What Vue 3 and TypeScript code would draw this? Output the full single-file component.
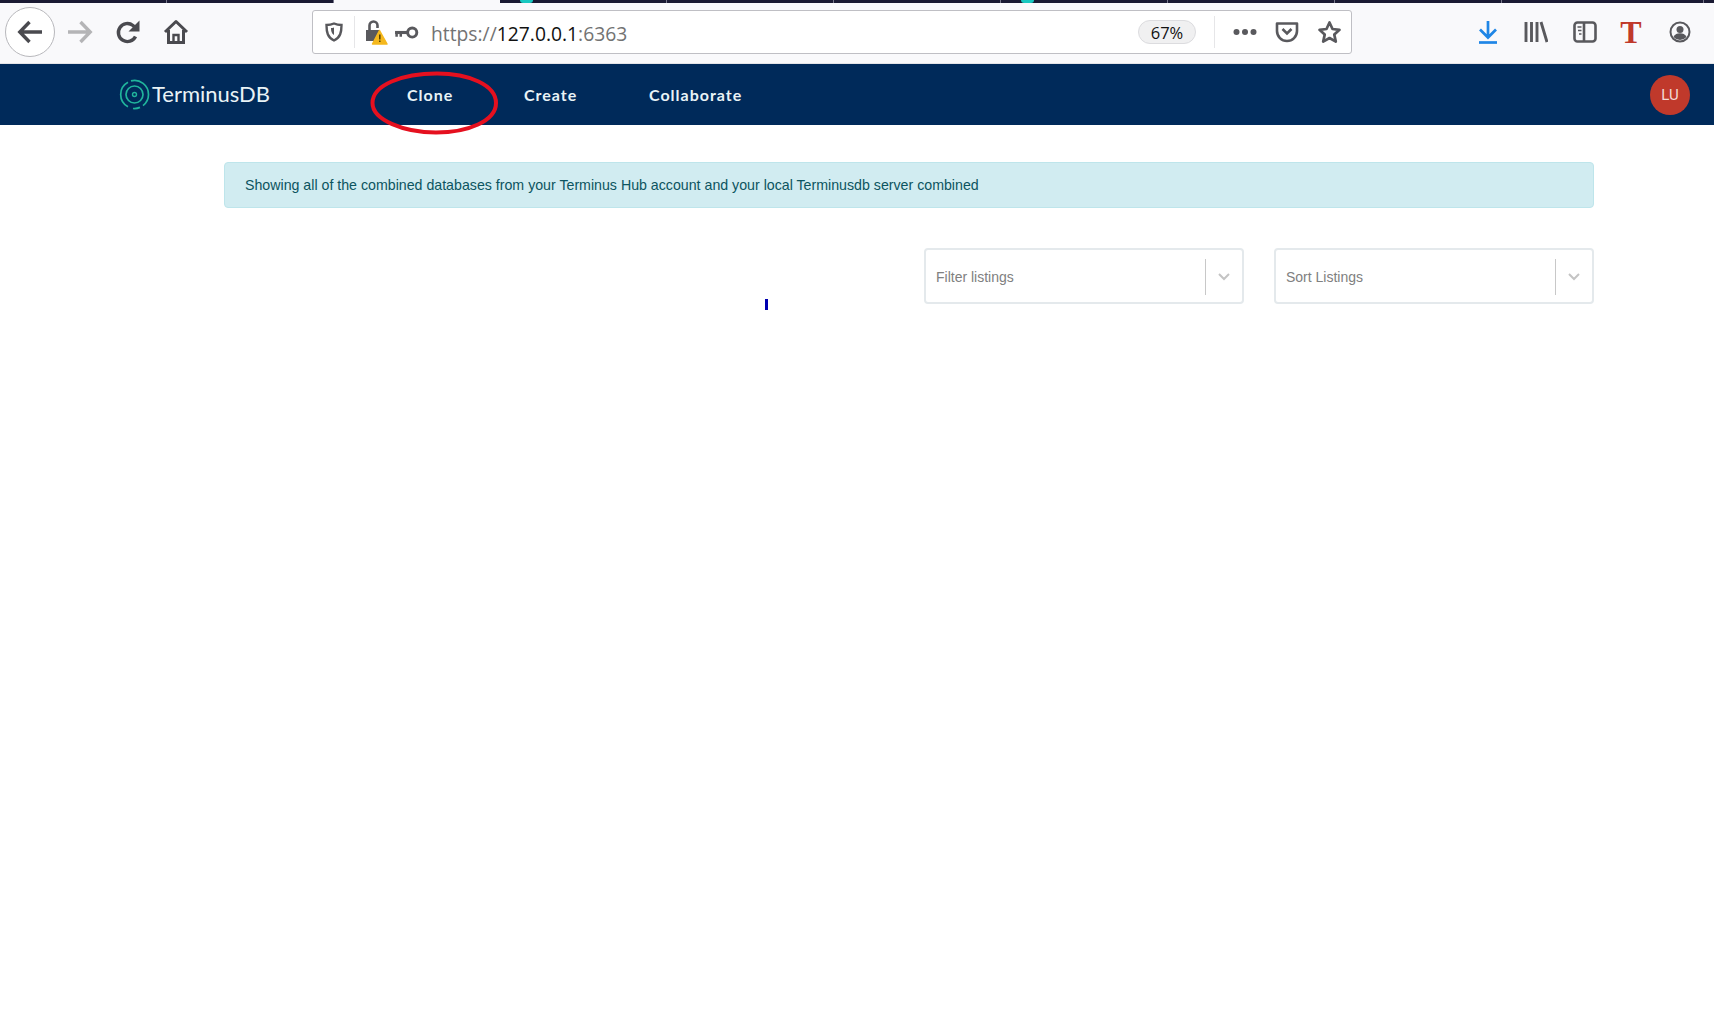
<script setup lang="ts">
const tabs = [
  { width: 167 },
  { width: 167 },
  { width: 166, active: true },
  { width: 167, glow: true },
  { width: 167 },
  { width: 167 },
  { width: 167, glow: true },
  { width: 167 },
  { width: 167 },
  { width: 202 },
];

const navLinks = [
  { label: "Clone", width: 117 },
  { label: "Create", width: 125 },
  { label: "Collaborate", width: 140 },
];

const selects = ["Filter listings", "Sort Listings"];
</script>

<template>
  <div class="page">
    <!-- browser chrome -->
    <div class="tabstrip">
      <div
        v-for="(tab, i) in tabs"
        :key="i"
        class="tab"
        :class="{ active: tab.active }"
        :style="{ width: tab.width + 'px' }"
      >
        <span v-if="tab.glow" class="glow" />
      </div>
    </div>

    <div class="toolbar">
      <div class="nav-buttons">
        <div class="back">
          <svg width="28" height="28" viewBox="0 0 28 28" fill="none" stroke="#4a4a4f" stroke-width="3.4">
            <path d="M26 14H4M13.500 4 3.800 14l9.700 10" />
          </svg>
        </div>
        <svg class="forward" width="28" height="28" viewBox="0 0 28 28" fill="none" stroke="#b4b4b6" stroke-width="3.4">
          <path d="M2 14h22M14.500 4l9.700 10-9.700 10" />
        </svg>
        <svg class="reload" width="26" height="26" viewBox="0 0 26 26" fill="none" stroke="#4a4a4f" stroke-width="3.4">
          <path d="M20.500 17.500A9 9 0 1 1 18 6.500L22 10" />
          <path d="M24.500 1.500v11h-11Z" fill="#4a4a4f" stroke="none" />
        </svg>
        <svg class="home" width="26" height="26" viewBox="0 0 26 26" fill="none" stroke="#4a4a4f" stroke-width="3">
          <path d="M2 13 13 2.500 24 13" stroke-linejoin="round" />
          <path d="M5.500 11v12.500h15V11" />
          <path d="M10.500 23v-7h5v7" stroke-width="2.400" />
        </svg>
      </div>

      <div class="urlbar">
        <svg class="shield" width="18" height="20" viewBox="0 0 18 20" fill="none">
          <path d="M9 1.500c3 1.300 5 1.500 7.500 1.500 0 7-1 12.500-7.500 15.500C2.500 15.500 1.500 10 1.500 3 4 3 6 2.800 9 1.500Z" stroke="#58585c" stroke-width="2.400" />
          <path d="M9 5.500c1 .5 2 .6 3 .6 0 3-.5 5.500-3 7Z" fill="#58585c" transform="matrix(-1 0 0 1 18 0)" />
        </svg>
        <span class="url-divider" />
        <svg class="lock" width="24" height="26" viewBox="0 0 24 26">
          <path d="M2 11h14v11H2Z" fill="#59595d" />
          <path d="M5.500 11V6.500a4 4 0 0 1 8 0V9" fill="none" stroke="#59595d" stroke-width="2.600" />
          <path d="M15.500 11.500 23 25H8.500Z" fill="#f5b81d" stroke="#f5b81d" stroke-linejoin="round" stroke-width="1.500" />
          <path d="M15 15.500h1.600v5H15ZM15 21.500h1.600v1.600H15Z" fill="#5b4300" />
        </svg>
        <svg class="key" width="25" height="15" viewBox="0 0 24 14" fill="none" stroke="#59595d">
          <circle cx="17.500" cy="7" r="4.400" stroke-width="2.800" />
          <path d="M13 7H1" stroke-width="3" />
          <path d="M2.500 7v4M6.500 7v4" stroke-width="2.400" />
        </svg>
        <div class="url-text">
          <span class="dim">https://</span><span>127.0.0.1</span><span class="dim">:6363</span>
        </div>
        <span class="zoom-pill">67%</span>
        <span class="url-divider tall" />
        <svg class="dots" width="24" height="8" viewBox="0 0 24 8" fill="#59595d">
          <circle cx="3.500" cy="4" r="3" />
          <circle cx="12" cy="4" r="3" />
          <circle cx="20.500" cy="4" r="3" />
        </svg>
        <svg class="pocket" width="24" height="22" viewBox="0 0 24 22" fill="none" stroke="#59595d" stroke-width="2.600">
          <path d="M2 2.500h20V10a10 10 0 0 1-20 0Z" stroke-linejoin="round" />
          <path d="m7.500 8 4.500 4.500L16.500 8" />
        </svg>
        <svg class="star" width="25" height="24" viewBox="0 0 25 24" fill="none" stroke="#59595d" stroke-width="2.700" stroke-linejoin="round">
          <path d="m12.500 2.500 3 6.500 7 .8-5.200 4.800 1.500 7-6.300-3.600-6.300 3.600 1.500-7L2.500 9.800l7-.8Z" />
        </svg>
      </div>

      <div class="tools">
        <svg width="20" height="24" viewBox="0 0 20 24" fill="none" stroke="#1f86e6" stroke-width="2.700">
          <path d="M10 1v15M2 9.500l8 8 8-8" />
          <path d="M1 22.500h18" />
        </svg>
        <svg class="library" width="24" height="22" viewBox="0 0 24 22" fill="none" stroke="#59595d" stroke-width="2.900">
          <path d="M2 1v20M7.500 1v20M13 1v20M17 1l6 20" />
        </svg>
        <svg width="24" height="22" viewBox="0 0 24 22" fill="none" stroke="#59595d" stroke-width="2.600">
          <rect x="1.500" y="1.500" width="21" height="19" rx="3" />
          <path d="M11 2v18" />
          <path d="M4.500 6h4M5 9.500h3.500M6 13h2.500" stroke-width="1.600" />
        </svg>
        <span class="t-ext">T</span>
        <svg width="22" height="22" viewBox="0 0 22 22" fill="none">
          <circle cx="11" cy="11" r="9.500" stroke="#59595d" stroke-width="2" />
          <circle cx="11" cy="8.500" r="3.500" fill="#59595d" />
          <path d="M4.500 16c1.500-3 3.500-3.800 6.500-3.800s5 .8 6.500 3.800A9 9 0 0 1 11 19a9 9 0 0 1-6.500-3Z" fill="#59595d" />
        </svg>
      </div>
    </div>

    <!-- app navbar -->
    <header class="navbar">
      <div class="brand">
        <svg width="31" height="31" viewBox="0 0 31 31" fill="none" stroke="#20b49c">
          <path d="M9 3.200A14 14 0 0 0 9 27.800" stroke-width="1.700" />
          <path d="M12 1.900A14 14 0 0 1 29.500 15.500 14 14 0 0 1 24 26.600" stroke-width="1.700" />
          <path d="M21 28.400a14 14 0 0 1-7 1.100" stroke-width="1.700" />
          <circle cx="15.500" cy="15.500" r="8.500" stroke-width="1.700" />
          <circle cx="15.500" cy="15.500" r="2" stroke-width="1.400" />
        </svg>
        <span class="brand-name">TerminusDB</span>
      </div>
      <nav class="links">
        <a v-for="link in navLinks" :key="link.label" :style="{ width: link.width + 'px' }">{{ link.label }}</a>
      </nav>
      <div class="avatar">LU</div>
      <svg class="callout" width="132" height="66" viewBox="0 0 132 66" fill="none">
        <path d="M68 3.500C100 3.500 127 15 127 33c0 18-28 29.500-60 29.500S3.500 50 3.500 33C3.500 15 33 3.500 68 3.500Z" stroke="#e5101f" stroke-width="4" />
      </svg>
    </header>

    <!-- content -->
    <main class="content">
      <div class="alert">Showing all of the combined databases from your Terminus Hub account and your local Terminusdb server combined</div>
      <div class="filters">
        <div v-for="label in selects" :key="label" class="select">
          <span class="placeholder">{{ label }}</span>
          <span class="select-sep" />
          <svg width="12" height="8" viewBox="0 0 12 8" fill="none" stroke="#c4c4c4" stroke-width="2">
            <path d="m1 1 5 5 5-5" />
          </svg>
        </div>
      </div>
      <span class="tick" />
    </main>
  </div>
</template>

<style scoped>
.page {
  width: 1714px;
  height: 1033px;
  overflow: hidden;
  background: #fff;
  font-family: "Liberation Sans", Arial, sans-serif;
}

.tabstrip {
  display: flex;
  height: 3px;
  background: #1a1a33;
}
.tab {
  position: relative;
  flex: none;
  border-right: 1px solid #77778a;
  box-sizing: border-box;
}
.tab.active {
  background: #f9f9fb;
  border-right: none;
}
.glow {
  position: absolute;
  left: 20px;
  top: 0;
  width: 13px;
  height: 3px;
  border-radius: 0 0 6px 6px;
  background: #18c8c0;
}

.toolbar {
  display: flex;
  align-items: center;
  height: 61px;
  background: #f9f9fb;
  border-bottom: 1px solid #e4e4e8;
  box-sizing: border-box;
  padding-bottom: 2px;
}
.nav-buttons {
  display: flex;
  align-items: center;
  width: 312px;
  flex: none;
  padding-left: 5px;
  box-sizing: border-box;
}
.back {
  display: flex;
  align-items: center;
  justify-content: center;
  width: 50px;
  height: 50px;
  box-sizing: border-box;
  border: 1px solid #b8b8bc;
  border-radius: 50%;
  background: #fff;
}
.forward {
  margin-left: 11px;
}
.reload {
  margin-left: 21px;
}
.home {
  margin-left: 22px;
}

.urlbar {
  display: flex;
  align-items: center;
  flex: none;
  width: 1040px;
  height: 44px;
  box-sizing: border-box;
  padding: 0 9px 0 12px;
  background: #fff;
  border: 1px solid #bfbfc4;
  border-radius: 3px;
}
.shield {
  flex: none;
}
.url-divider {
  width: 1px;
  height: 32px;
  margin-left: 11px;
  background: #e6e6e8;
}
.url-divider.tall {
  margin-left: 18px;
}
.lock {
  margin-left: 9px;
}
.key {
  margin-left: 6px;
}
.url-text {
  flex: 1;
  margin-left: 12px;
  padding-top: 2px;
  font-family: "Open Sans", sans-serif;
  font-size: 19.3px;
  color: #111;
  white-space: nowrap;
}
.dim {
  color: #737373;
}
.zoom-pill {
  width: 58px;
  height: 24px;
  box-sizing: border-box;
  border: 1px solid #dcdcdf;
  border-radius: 12px;
  background: #f0f0f1;
  font-family: "Open Sans", sans-serif;
  font-size: 16.500px;
  line-height: 23px;
  text-align: center;
  color: #111;
}
.dots {
  margin-left: 18px;
}
.pocket {
  margin-left: 18px;
}
.star {
  margin-left: 18px;
}

.tools {
  display: flex;
  align-items: center;
  gap: 25px;
  padding-left: 126px;
}
.library {
  margin-left: 1px;
}
.t-ext {
  width: 22px;
  margin: 0 2px 0 -2px;
  font-family: "Liberation Serif", serif;
  font-size: 32px;
  font-weight: 700;
  line-height: 28px;
  text-align: center;
  color: #c0392b;
}

.navbar {
  position: relative;
  display: flex;
  align-items: center;
  height: 61px;
  padding: 0 24px 0 119px;
  background: #002a5a;
}
.brand {
  display: flex;
  align-items: center;
  gap: 2px;
  width: 288px;
  flex: none;
}
.brand-name {
  margin-bottom: 3px;
  font-family: Lato, sans-serif;
  font-size: 22px;
  color: #e9f3f6;
}
.links {
  display: flex;
  flex: 1;
}
.links a {
  margin-bottom: 1px;
  font-family: Lato, sans-serif;
  font-size: 16px;
  font-weight: 700;
  letter-spacing: 1px;
  color: #e9f3f6;
}
.avatar {
  width: 40px;
  height: 40px;
  border-radius: 50%;
  background: #c0392b;
  font-family: Roboto, sans-serif;
  font-size: 15px;
  line-height: 40px;
  text-align: center;
  color: #f3d9d5;
}
.callout {
  position: absolute;
  left: 369px;
  top: 6px;
}

.content {
  position: relative;
  padding: 37px 120px 0 224px;
}
.alert {
  height: 46px;
  box-sizing: border-box;
  padding-left: 20px;
  background: #d1ecf1;
  border: 1px solid #bee5eb;
  border-radius: 4px;
  font-size: 14.2px;
  line-height: 44px;
  color: #0c5460;
}
.filters {
  display: flex;
  justify-content: flex-end;
  gap: 30px;
  margin-top: 40px;
}
.select {
  display: flex;
  align-items: center;
  width: 320px;
  height: 56px;
  box-sizing: border-box;
  padding: 2px 12px 0 10px;
  background: #fff;
  border: 2px solid #e4e9ec;
  border-radius: 4px;
}
.placeholder {
  flex: 1;
  font-size: 14px;
  color: #808080;
}
.select-sep {
  width: 1px;
  height: 36px;
  margin-right: 12px;
  background: #c8c8c8;
}
.tick {
  position: absolute;
  left: 765px;
  top: 174px;
  width: 3px;
  height: 11px;
  background: #0000b0;
}
</style>
<style>
html,
body {
  margin: 0;
  background: #fff;
}
</style>
